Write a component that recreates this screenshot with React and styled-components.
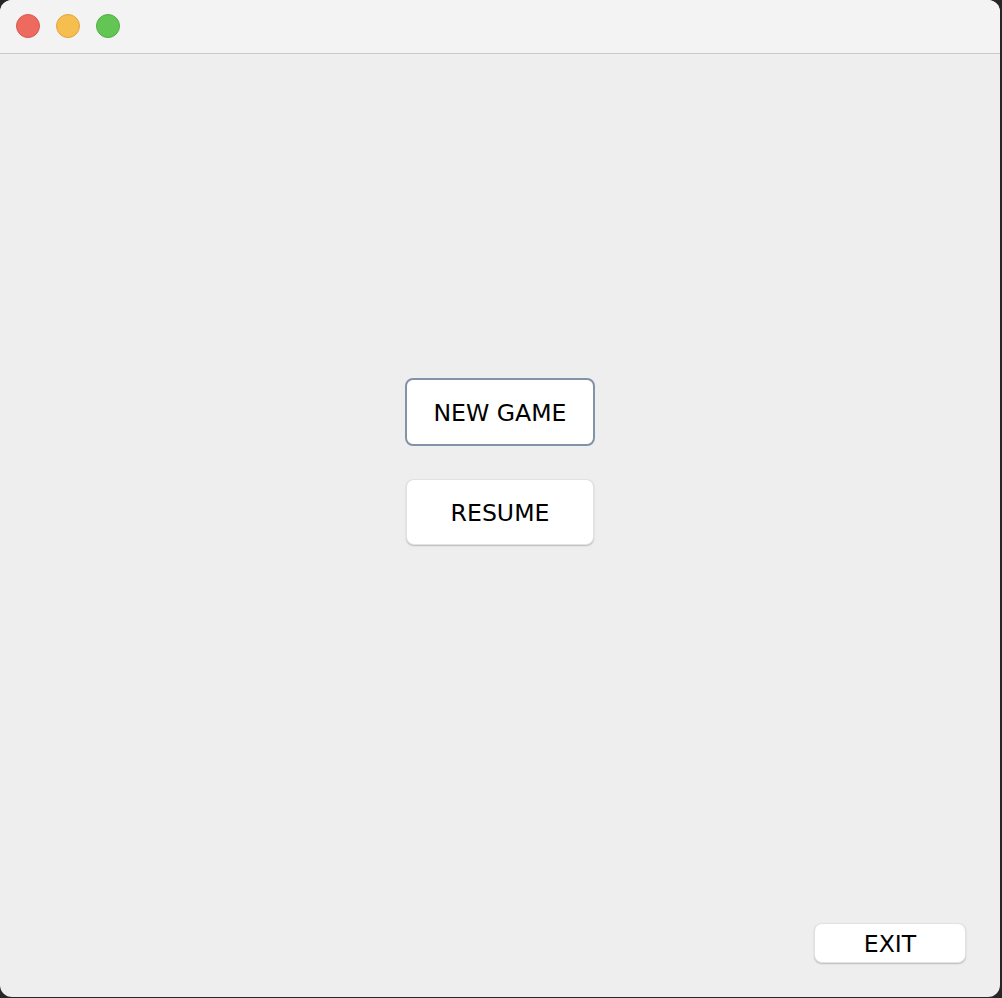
import React from 'react';
import styled, { createGlobalStyle } from 'styled-components';

const GlobalStyle = createGlobalStyle`
  html, body {
    margin: 0;
    padding: 0;
    background: #262626;
  }
  body {
    font-family: "DejaVu Sans", "Liberation Sans", sans-serif;
  }
`;

const Screen = styled.div`
  width: 1002px;
  height: 998px;
  background: #262626;
  overflow: hidden;
`;

const Window = styled.div`
  width: 1000px;
  height: 997px;
  border-radius: 12px;
  overflow: hidden;
  display: flex;
  flex-direction: column;
  background: #eeeeee;
`;

const TitleBar = styled.div`
  height: 54px;
  flex-shrink: 0;
  display: flex;
  align-items: center;
  gap: 16px;
  padding: 0 0 2px 16px;
  box-sizing: border-box;
  background: #f3f3f3;
  border-bottom: 1px solid #c9c9c9;
`;

const Light = styled.span`
  width: 24px;
  height: 24px;
  border-radius: 50%;
  box-sizing: border-box;
  background: ${(p) => p.color};
  border: 1px solid ${(p) => p.edge};
`;

const Content = styled.div`
  flex: 1;
  display: flex;
  flex-direction: column;
`;

const Menu = styled.div`
  padding-top: 324px;
  display: flex;
  flex-direction: column;
  align-items: center;
  gap: 33px;
`;

const Button = styled.button`
  box-sizing: border-box;
  width: ${(p) => p.w}px;
  height: ${(p) => p.h}px;
  margin: 0;
  padding: 2px 0 0;
  background: #ffffff;
  border: ${(p) => (p.focused ? '2px solid #8292a9' : '1px solid #e2e2e2')};
  border-radius: 8px;
  box-shadow: ${(p) => (p.focused ? 'none' : '0 1px 1.5px rgba(0, 0, 0, 0.22)')};
  font-family: "DejaVu Sans", "Liberation Sans", sans-serif;
  font-size: 23.6px;
  color: #000000;
  cursor: pointer;
`;

const Footer = styled.div`
  margin-top: auto;
  display: flex;
  justify-content: flex-end;
  padding: 0 34px 34px 0;
`;

const App = () => (
  <Screen>
    <GlobalStyle />
    <Window>
      <TitleBar>
        <Light color="#ee6a5f" edge="#d65a50" />
        <Light color="#f6be4f" edge="#dea63c" />
        <Light color="#62c554" edge="#4fae43" />
      </TitleBar>
      <Content>
        <Menu>
          <Button w={190} h={68} focused>NEW GAME</Button>
          <Button w={188} h={66}>RESUME</Button>
        </Menu>
        <Footer>
          <Button w={152} h={40}>EXIT</Button>
        </Footer>
      </Content>
    </Window>
  </Screen>
);

export default App;
